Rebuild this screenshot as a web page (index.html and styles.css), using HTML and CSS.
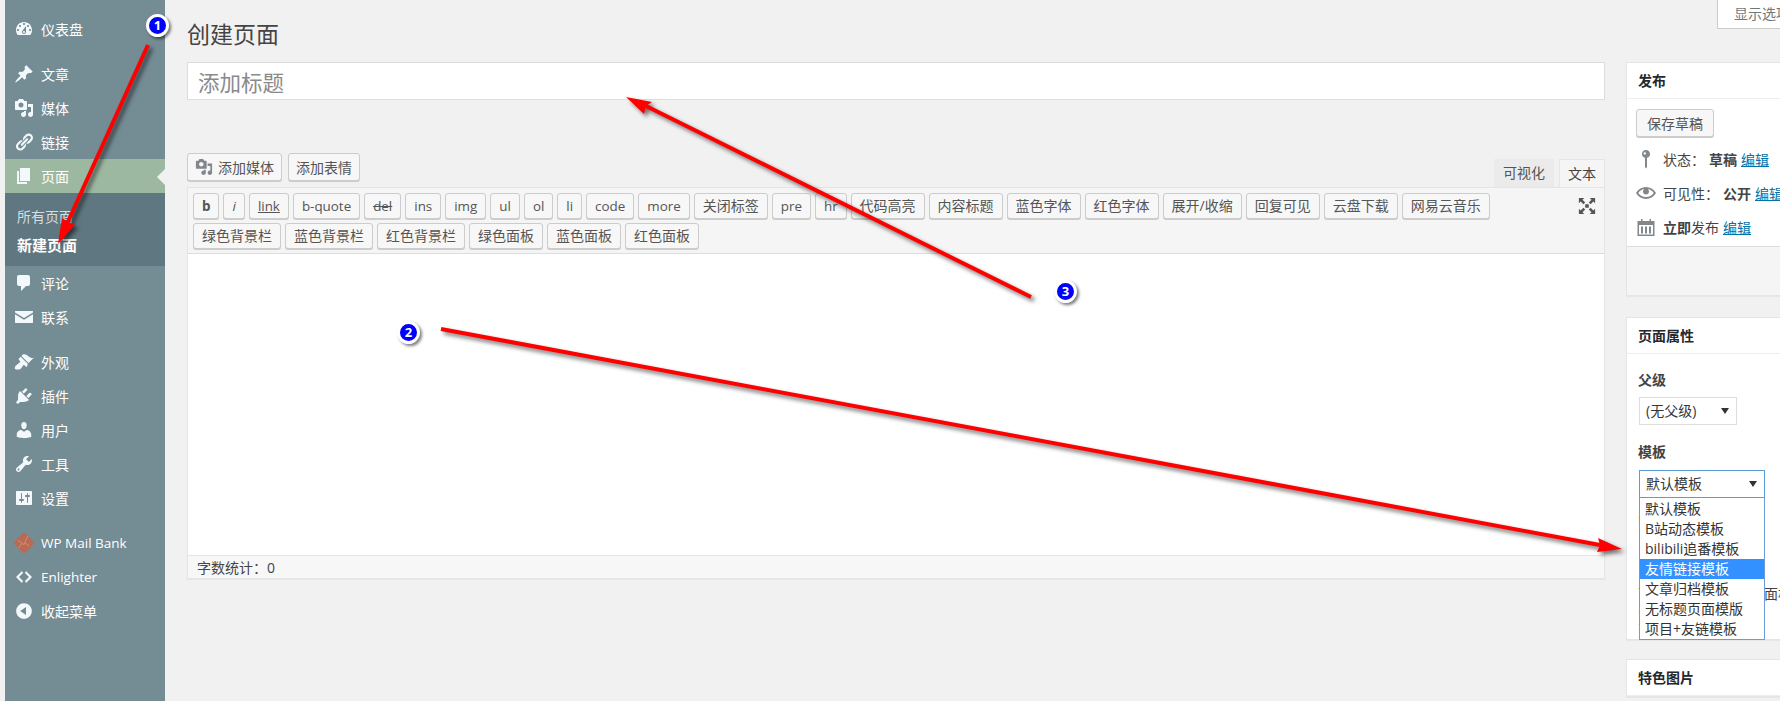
FILE: index.html
```html
<!DOCTYPE html>
<html>
<head>
    <meta charset="utf-8">
    <title>创建页面</title>
    <link rel="stylesheet" href="styles.css">
</head>
<body>
    <svg class="sprite" width="0" height="0">
        <symbol id="i-dash" viewBox="0 0 20 20"><path d="M3.76 16h12.48c1.1-1.37 1.76-3.11 1.76-5 0-4.42-3.58-8-8-8s-8 3.58-8 8c0 1.89.66 3.63 1.76 5zM10 4c.55 0 1 .45 1 1s-.45 1-1 1-1-.45-1-1 .45-1 1-1zM6 6c.55 0 1 .45 1 1s-.45 1-1 1-1-.45-1-1 .45-1 1-1zm8 0c.55 0 1 .45 1 1s-.45 1-1 1-1-.45-1-1 .45-1 1-1zm-5.37 5.55L12 7v6c0 1.1-.9 2-2 2s-2-.9-2-2c0-.57.24-1.08.63-1.45zM4 10c.55 0 1 .45 1 1s-.45 1-1 1-1-.45-1-1 .45-1 1-1zm12 0c.55 0 1 .45 1 1s-.45 1-1 1-1-.45-1-1 .45-1 1-1zm-5 3c0-.55-.45-1-1-1s-1 .45-1 1 .45 1 1 1 1-.45 1-1z" fill-rule="evenodd"/></symbol>
        <symbol id="i-pin" viewBox="0 0 20 20"><path d="M10.44 3.02l1.82-1.82 6.36 6.35-1.83 1.82c-1.05-.68-2.48-.57-3.41.36l-.75.75c-.92.93-1.04 2.35-.35 3.41l-1.83 1.82-2.41-2.41-2.8 2.79c-.42.42-3.38 2.71-3.8 2.29s1.86-3.39 2.28-3.81l2.79-2.79L4.1 9.36l1.83-1.82c1.05.69 2.48.57 3.4-.36l.75-.75c.93-.92 1.05-2.35.36-3.41z"/></symbol>
        <symbol id="i-media" viewBox="0 0 20 20"><path d="M13 11V4c0-.55-.45-1-1-1h-1.67L9 1H5L3.67 3H2c-.55 0-1 .45-1 1v7c0 .55.45 1 1 1h10c.55 0 1-.45 1-1zM7 4.5c1.38 0 2.5 1.12 2.5 2.5S8.38 9.5 7 9.5 4.5 8.38 4.5 7 5.62 4.5 7 4.5zM14 6h5v10.5c0 1.38-1.12 2.5-2.5 2.5S14 17.88 14 16.5s1.12-2.5 2.5-2.5c.17 0 .34.02.5.05V9h-3V6zm-4 8.05V13h2v3.5c0 1.38-1.12 2.5-2.5 2.5S7 17.88 7 16.5 8.12 14 9.5 14c.17 0 .34.02.5.05z"/></symbol>
        <symbol id="i-link" viewBox="0 0 20 20"><path d="M17.74 2.76c1.68 1.69 1.68 4.41 0 6.1l-1.53 1.52c-1.12 1.12-2.7 1.49-4.13 1.13l4.15-4.15c.84-.84.84-2.2 0-3.04-.84-.85-2.2-.85-3.04 0L9.04 8.47c-.36-1.43.01-3.01 1.13-4.13l1.47-1.58c1.69-1.68 4.42-1.68 6.1 0zM8.59 13.43l5.34-5.34c.42-.42.42-1.1 0-1.52-.44-.43-1.13-.39-1.53 0l-5.33 5.34c-.42.42-.42 1.1 0 1.52.44.43 1.13.39 1.52 0zm-.76 2.29l4.14-4.15c.38 1.44 0 3.02-1.14 4.16l-1.52 1.52c-1.69 1.69-4.41 1.69-6.1 0-1.68-1.68-1.68-4.41 0-6.1l1.53-1.52c1.13-1.14 2.71-1.52 4.15-1.14L4.7 12.74c-.84.84-.84 2.2 0 3.04.84.85 2.2.85 3.13-.06z"/></symbol>
        <symbol id="i-page" viewBox="0 0 20 20"><path d="M6 15V2h10v13H6zm-1 1h8v2H3V5h2v11z"/></symbol>
        <symbol id="i-comment" viewBox="0 0 20 20"><path d="M5 2h9c1.1 0 2 .9 2 2v7c0 1.1-.9 2-2 2h-2l-5 5v-5H5c-1.1 0-2-.9-2-2V4c0-1.1.9-2 2-2z"/></symbol>
        <symbol id="i-mail" viewBox="0 0 20 20"><path d="M1.5 4h17c.3 0 .5.2.5.5v1L10 11 1 5.5v-1c0-.3.2-.5.5-.5zM1 7.3l9 5.5 9-5.5v8.2c0 .3-.2.5-.5.5h-17c-.3 0-.5-.2-.5-.5z"/></symbol>
        <symbol id="i-brush" viewBox="0 0 20 20"><path d="M14.48 11.06L7.41 3.99l1.5-1.5c.5-.56 2.3-.47 3.51.32 1.21.8 1.43 1.28 2.91 2.1 1.18.64 2.45 1.26 4.45.85zm-.71.71L6.7 4.7 4.93 6.47c-.39.39-.39 1.02 0 1.41l1.06 1.06c.39.39.39 1.03 0 1.42-.6.6-1.43 1.11-2.21 1.69-.35.26-.7.53-1.01.84C1.43 13.23.4 15.86.85 16.65c.44.79 3.2 1.11 4.52.88.83-.14 1.8-1.15 2.33-2.06.42-.73.9-1.48 1.5-2.08.39-.39 1.03-.39 1.42 0l1.06 1.06c.39.39 1.02.39 1.41 0z"/></symbol>
        <symbol id="i-plug" viewBox="0 0 20 20"><path d="M13.11 4.36L9.87 7.6 8 5.73l3.24-3.24c.35-.34 1.05-.2 1.56.32.52.51.66 1.21.31 1.55zm-8 1.77l.91-1.12 9.01 9.01-1.19.84c-.71.71-2.63 1.16-3.82 1.16H6.14L4.9 17.26c-.59.59-1.54.59-2.12 0-.59-.58-.59-1.53 0-2.12l1.24-1.24v-3.88c0-1.13.4-3.19 1.09-3.89zm7.26 3.97l3.24-3.24c.34-.35 1.04-.21 1.55.31.52.51.66 1.21.31 1.55l-3.24 3.25z"/></symbol>
        <symbol id="i-user" viewBox="0 0 20 20"><path d="M10 9.25c-2.27 0-2.73-3.44-2.73-3.44C7 4.02 7.82 2 9.97 2c2.16 0 2.98 2.02 2.71 3.81 0 0-.41 3.44-2.68 3.44zm0 2.57L12.72 10c2.39 0 4.52 2.33 4.52 4.53v2.49s-3.65 1.13-7.24 1.13c-3.65 0-7.24-1.13-7.24-1.13v-2.49c0-2.25 1.94-4.48 4.47-4.48z"/></symbol>
        <symbol id="i-tool" viewBox="0 0 20 20"><path d="M16.68 9.77c-1.34 1.34-3.3 1.67-4.95.99l-5.41 6.52c-.99.99-2.59.99-3.58 0s-.99-2.59 0-3.57l6.52-5.42c-.68-1.65-.35-3.61.99-4.95 1.28-1.28 3.12-1.62 4.72-1.06l-2.89 2.89 2.82 2.82 2.86-2.87c.53 1.58.18 3.39-1.08 4.65zM3.81 16.21c.4.39 1.04.39 1.43 0 .4-.4.4-1.04 0-1.43-.39-.4-1.03-.4-1.43 0-.39.39-.39 1.03 0 1.43z"/></symbol>
        <symbol id="i-set" viewBox="0 0 20 20"><path d="M18 16V4c0-.55-.45-1-1-1H3c-.55 0-1 .45-1 1v12c0 .55.45 1 1 1h14c.55 0 1-.45 1-1zM8 11h1c.55 0 1 .45 1 1s-.45 1-1 1H8v1.5c0 .28-.22.5-.5.5s-.5-.22-.5-.5V13H6c-.55 0-1-.45-1-1s.45-1 1-1h1V5.5c0-.28.22-.5.5-.5s.5.22.5.5V11zm5-2h-1c-.55 0-1-.45-1-1s.45-1 1-1h1V5.5c0-.28.22-.5.5-.5s.5.22.5.5V7h1c.55 0 1 .45 1 1s-.45 1-1 1h-1v5.5c0 .28-.22.5-.5.5s-.5-.22-.5-.5V9z"/></symbol>
        <symbol id="i-bank" viewBox="0 0 20 20"><path d="M11 1l8 8c.6.6.6 1.4 0 2l-8 8c-.6.6-1.4.6-2 0l-8-8c-.6-.6-.6-1.4 0-2l8-8c.6-.6 1.4-.6 2 0z" fill="#b86b52"/><path d="M4.5 7.5l5.5 4 3.5-8M5 14.5l3.5-4.5M15 13l-4-3" fill="none" stroke="#d9957f" stroke-width=".7"/></symbol>
        <symbol id="i-code" viewBox="0 0 20 20"><path d="M9 6l-4 4 4 4-1 2-6-6 6-6zm2 8l4-4-4-4 1-2 6 6-6 6z"/></symbol>
        <symbol id="i-back" viewBox="0 0 20 20"><path d="M10 2.16c4.33 0 7.84 3.51 7.84 7.84s-3.51 7.84-7.84 7.84S2.16 14.33 2.16 10 5.71 2.16 10 2.16zm2 11.72V6.12L6.18 9.97z"/></symbol>
        <symbol id="i-marker" viewBox="0 0 20 20"><path d="M10 1a4 4 0 0 1 1 7.87V18l-1 1.5L9 18V8.87A4 4 0 0 1 10 1zM8.8 3.2a1.2 1.2 0 1 0 0 2.4 1.2 1.2 0 0 0 0-2.4z" fill-rule="evenodd"/></symbol>
        <symbol id="i-eye" viewBox="0 0 20 20"><path d="M19.7 9.4C17.7 6 14 3.9 10 3.9S2.3 6 .3 9.4L0 10l.3.6c2 3.4 5.7 5.5 9.7 5.5s7.7-2.1 9.7-5.5l.3-.6-.3-.6zM10 14.1c-3.1 0-6-1.6-7.7-4.1C3.6 8 5.7 6.6 8 6.1 7.3 6.8 7 7.6 7 8.5c0 1.7 1.3 3 3 3s3-1.3 3-3c0-.9-.3-1.7-1-2.4 2.3.5 4.4 1.9 5.7 3.9-1.7 2.5-4.6 4.1-7.7 4.1z"/></symbol>
        <symbol id="i-cal" viewBox="0 0 20 20"><path d="M1.5 4H5V2h1.5v2h7V2H15v2h3.5v15h-17zM3 8v9.5h14V8zm2 1.5h2v7H5zm4 0h2v7H9zm4 0h2v7h-2z" fill-rule="evenodd"/></symbol>
        <symbol id="i-full" viewBox="0 0 20 20"><path d="M1 1h6L5 3l3 3-2 2-3-3-2 2zm18 0v6l-2-2-3 3-2-2 3-3-2-2zM1 19v-6l2 2 3-3 2 2-3 3 2 2zm18 0h-6l2-2-3-3 2-2 3 3 2-2zM8 8h4v4H8z"/></symbol>
    </svg>

    <div class="wrap">
        <div class="sidebar">
            <div class="menu-group">
                <div class="menu-item"><svg class="menu-icon"><use href="#i-dash"/></svg>仪表盘</div>
            </div>
            <div class="menu-group">
                <div class="menu-item"><svg class="menu-icon"><use href="#i-pin"/></svg>文章</div>
                <div class="menu-item"><svg class="menu-icon"><use href="#i-media"/></svg>媒体</div>
                <div class="menu-item"><svg class="menu-icon"><use href="#i-link"/></svg>链接</div>
                <div class="menu-item active"><svg class="menu-icon"><use href="#i-page"/></svg>页面</div>
                <div class="submenu">
                    <div class="sub-item">所有页面</div>
                    <div class="sub-item current">新建页面</div>
                </div>
                <div class="menu-item"><svg class="menu-icon"><use href="#i-comment"/></svg>评论</div>
                <div class="menu-item"><svg class="menu-icon"><use href="#i-mail"/></svg>联系</div>
            </div>
            <div class="menu-group">
                <div class="menu-item"><svg class="menu-icon"><use href="#i-brush"/></svg>外观</div>
                <div class="menu-item"><svg class="menu-icon"><use href="#i-plug"/></svg>插件</div>
                <div class="menu-item"><svg class="menu-icon"><use href="#i-user"/></svg>用户</div>
                <div class="menu-item"><svg class="menu-icon"><use href="#i-tool"/></svg>工具</div>
                <div class="menu-item"><svg class="menu-icon"><use href="#i-set"/></svg>设置</div>
            </div>
            <div class="menu-group">
                <div class="menu-item latin"><svg class="menu-icon bank"><use href="#i-bank"/></svg>WP Mail Bank</div>
                <div class="menu-item latin"><svg class="menu-icon"><use href="#i-code"/></svg>Enlighter</div>
                <div class="menu-item"><svg class="menu-icon"><use href="#i-back"/></svg>收起菜单</div>
            </div>
        </div>

        <div class="main">
            <div class="content">
                <h1 class="title">创建页面</h1>
                <div class="title-input">添加标题</div>

                <div class="editor-top">
                    <div class="media-buttons">
                        <div class="btn"><svg class="btn-icon"><use href="#i-media"/></svg>添加媒体</div>
                        <div class="btn">添加表情</div>
                    </div>
                    <div class="tabs">
                        <div class="tab">可视化</div>
                        <div class="tab on">文本</div>
                    </div>
                </div>

                <div class="editor">
                    <div class="toolbar">
                        <div class="qt-row">
                            <div class="qt lat strong">b</div>
                            <div class="qt lat em">i</div>
                            <div class="qt lat under">link</div>
                            <div class="qt lat">b-quote</div>
                            <div class="qt lat strike">del</div>
                            <div class="qt lat">ins</div>
                            <div class="qt lat">img</div>
                            <div class="qt lat">ul</div>
                            <div class="qt lat">ol</div>
                            <div class="qt lat">li</div>
                            <div class="qt lat">code</div>
                            <div class="qt lat">more</div>
                            <div class="qt">关闭标签</div>
                            <div class="qt lat">pre</div>
                            <div class="qt lat">hr</div>
                            <div class="qt">代码高亮</div>
                            <div class="qt">内容标题</div>
                            <div class="qt">蓝色字体</div>
                            <div class="qt">红色字体</div>
                            <div class="qt">展开/收缩</div>
                            <div class="qt">回复可见</div>
                            <div class="qt">云盘下载</div>
                            <div class="qt">网易云音乐</div>
                            <svg class="full-icon"><use href="#i-full"/></svg>
                        </div>
                        <div class="qt-row">
                            <div class="qt">绿色背景栏</div>
                            <div class="qt">蓝色背景栏</div>
                            <div class="qt">红色背景栏</div>
                            <div class="qt">绿色面板</div>
                            <div class="qt">蓝色面板</div>
                            <div class="qt">红色面板</div>
                        </div>
                    </div>
                    <div class="editor-body"></div>
                    <div class="status-bar">字数统计：0</div>
                </div>
            </div>

            <div class="side">
                <div class="box publish">
                    <div class="box-head">发布</div>
                    <div class="box-body">
                        <div class="btn save">保存草稿</div>
                        <div class="pub-row"><svg class="pub-icon"><use href="#i-marker"/></svg>状态： <b>草稿</b> <a href="#">编辑</a></div>
                        <div class="pub-row"><svg class="pub-icon"><use href="#i-eye"/></svg>可见性： <b>公开</b> <a href="#">编辑</a></div>
                        <div class="pub-row"><svg class="pub-icon"><use href="#i-cal"/></svg><span><b>立即</b>发布</span> <a href="#">编辑</a></div>
                    </div>
                    <div class="box-foot"></div>
                </div>

                <div class="box attrs">
                    <div class="box-head">页面属性</div>
                    <div class="box-body">
                        <div class="attr-label">父级</div>
                        <div class="select parent">(无父级)<i class="caret"></i></div>
                        <div class="attr-label second">模板</div>
                        <div class="template-wrap">
                            <div class="select focus">默认模板<i class="caret"></i></div>
                            <div class="dropdown">
                                <div class="option">默认模板</div>
                                <div class="option">B站动态模板</div>
                                <div class="option">bilibili追番模板</div>
                                <div class="option hover">友情链接模板</div>
                                <div class="option">文章归档模板</div>
                                <div class="option">无标题页面模版</div>
                                <div class="option">项目+友链模板</div>
                            </div>
                        </div>
                        <p class="attr-note">需要帮助</p>
                        <p class="attr-note low">可在显示选项中启用面板<br>页面排序</p>
                    </div>
                </div>

                <div class="box">
                    <div class="box-head">特色图片</div>
                </div>
            </div>
        </div>
    </div>

    <div class="screen-tab">显示选项</div>

    <!-- annotations drawn over the screenshot -->
    <svg class="arrows" width="1780" height="701">
        <g class="arrow">
            <line x1="148" y1="45" x2="66" y2="226"/>
            <polygon points="58,244 62,218 68,222 75,225"/>
        </g>
        <g class="arrow">
            <line x1="441" y1="329" x2="1600" y2="545"/>
            <polygon points="1622,549 1598,538 1600,545 1597,552"/>
        </g>
        <g class="arrow">
            <line x1="1031" y1="297" x2="646" y2="106"/>
            <polygon points="626,97 652,102 646,106 644,114"/>
        </g>
    </svg>
    <div class="badge b1">1</div>
    <div class="badge b2">2</div>
    <div class="badge b3">3</div>
</body>
</html>
```

FILE: styles.css
```css
html, body {
    margin: 0;
    height: 701px;
    overflow: hidden;
}

body {
    position: relative;
    background-color: #f1f1f1;
    color: #444;
    font-family: "Open Sans", "Noto Sans CJK SC", sans-serif;
    font-size: 14px;
}

.sprite {
    position: absolute;
}

.wrap {
    display: flex;
    height: 701px;
    padding-left: 5px;
}

/* left menu */
.sidebar {
    flex: 0 0 160px;
    padding-top: 12px;
    background-color: #748c94;
    color: #fff;
}

.menu-group {
    margin-bottom: 11px;
}

.menu-item {
    position: relative;
    display: flex;
    align-items: center;
    height: 34px;
    padding-left: 9px;
}

.menu-item.latin {
    font-size: 13.5px;
}

.menu-icon {
    flex: none;
    width: 20px;
    height: 20px;
    margin-right: 7px;
    fill: #f2f8fb;
}

.menu-icon.bank {
    width: 22px;
    height: 22px;
    margin-left: -1px;
    margin-right: 6px;
}

.menu-item.active {
    background-color: #9db8a0;
}

.menu-item.active::after {
    content: "";
    position: absolute;
    right: 0;
    top: 10px;
    border: 8px solid transparent;
    border-right-color: #f1f1f1;
    border-left-width: 0;
}

.submenu {
    height: 73px;
    padding-top: 9px;
    box-sizing: border-box;
    background-color: #5f7780;
}

.sub-item {
    height: 29px;
    line-height: 29px;
    padding-left: 12px;
    color: #d5dee1;
}

.sub-item.current {
    color: #fff;
    font-size: 15px;
    font-weight: 700;
}

/* main area */
.main {
    flex: 1;
    display: flex;
    gap: 21px;
    padding-left: 22px;
    min-width: 0;
}

.content {
    flex: 0 0 1418px;
}

.title {
    margin: 0;
    padding-top: 19px;
    height: 62px;
    box-sizing: border-box;
    line-height: 31px;
    font-size: 23px;
    font-weight: 400;
    color: #444;
}

.title-input {
    height: 38px;
    box-sizing: border-box;
    padding-left: 10px;
    background-color: #fff;
    border: 1px solid #ddd;
    line-height: 39px;
    font-size: 21.5px;
    color: #8a8a8a;
}

.editor-top {
    display: flex;
    justify-content: space-between;
    height: 34px;
    margin-top: 53px;
}

.media-buttons {
    display: flex;
    gap: 6px;
}

.btn {
    display: flex;
    align-items: center;
    height: 28px;
    box-sizing: border-box;
    padding: 0 7px;
    background-color: #f7f7f7;
    border: 1px solid #ccc;
    border-radius: 3px;
    box-shadow: 0 1px 0 #ccc;
    color: #555;
}

.btn-icon {
    width: 18px;
    height: 18px;
    margin-right: 5px;
    fill: #82878c;
}

.tabs {
    display: flex;
    align-items: flex-end;
    gap: 5px;
}

.tab {
    height: 28px;
    box-sizing: border-box;
    padding: 0 9px;
    line-height: 28px;
    background-color: #ebebeb;
    color: #555;
}

.tab.on {
    padding: 0 8px;
    background-color: #f5f5f5;
    border: 1px solid #e5e5e5;
    border-bottom: none;
    color: #444;
}

.editor {
    border: 1px solid #e5e5e5;
    background-color: #fff;
    box-shadow: 0 1px 1px rgba(0, 0, 0, 0.04);
}

.toolbar {
    height: 66px;
    box-sizing: border-box;
    padding: 5px 5px 0;
    background-color: #f5f5f5;
    border-bottom: 1px solid #ddd;
}

.qt-row {
    display: flex;
    align-items: center;
    gap: 4px;
    height: 26px;
    margin-bottom: 4px;
}

.qt {
    height: 26px;
    box-sizing: border-box;
    padding: 0 8px;
    line-height: 24px;
    background-color: #f7f7f7;
    border: 1px solid #ccc;
    border-radius: 3px;
    box-shadow: 0 1px 0 #ccc;
    color: #555;
    white-space: nowrap;
}

.qt.lat {
    font-size: 13.4px;
}

.qt.strong {
    font-weight: 700;
}

.qt.em {
    font-style: italic;
}

.qt.under {
    text-decoration: underline;
}

.qt.strike {
    text-decoration: line-through;
}

.full-icon {
    width: 18px;
    height: 18px;
    margin-left: auto;
    margin-right: 3px;
    fill: #555;
}

.editor-body {
    height: 301px;
}

.status-bar {
    height: 23px;
    box-sizing: border-box;
    padding-left: 9px;
    line-height: 24px;
    background-color: #f7f7f7;
    border-top: 1px solid #e5e5e5;
    color: #444;
}

/* right column */
.side {
    flex: 0 0 280px;
    padding-top: 62px;
}

.box {
    margin-bottom: 21px;
    background-color: #fff;
    border: 1px solid #e5e5e5;
    box-shadow: 0 1px 1px rgba(0, 0, 0, 0.04);
}

.box-head {
    height: 36px;
    box-sizing: border-box;
    padding-left: 11px;
    line-height: 36px;
    border-bottom: 1px solid #eee;
    font-weight: 700;
    color: #23282d;
}

.publish .box-body {
    height: 147px;
    box-sizing: border-box;
    padding: 10px 9px 0;
}

.btn.save {
    display: inline-flex;
    padding: 0 10px;
    margin-bottom: 5px;
}

.pub-row {
    display: flex;
    align-items: center;
    gap: 4px;
    height: 34px;
    white-space: nowrap;
}

.pub-row a {
    color: #0073aa;
}

.pub-row b {
    color: #444;
}

.pub-icon {
    flex: none;
    width: 20px;
    height: 20px;
    margin-right: 3px;
    fill: #82878c;
}

.box-foot {
    height: 48px;
    background-color: #f5f5f5;
    border-top: 1px solid #ddd;
}

.attrs {
    height: 323px;
    box-sizing: border-box;
    margin-bottom: 19px;
}

.attrs .box-body {
    padding: 15px 12px 0;
}

.attr-label {
    height: 22px;
    margin-left: -1px;
    line-height: 22px;
    font-weight: 700;
    color: #444;
}

.attr-label.second {
    margin-top: 16px;
}

.select {
    position: relative;
    height: 28px;
    box-sizing: border-box;
    padding-left: 6px;
    line-height: 26px;
    background-color: #fff;
    border: 1px solid #ddd;
    color: #32373c;
    margin-top: 6px;
}

.select.parent {
    width: 98px;
}

.select.focus {
    width: 126px;
    border-color: #5b9dd9;
    margin-top: 0;
}

.caret {
    position: absolute;
    right: 7px;
    top: 10px;
    border: 4px solid transparent;
    border-top: 6px solid #333;
    border-bottom-width: 0;
}

.template-wrap {
    position: relative;
    margin-top: 7px;
    height: 28px;
}

.dropdown {
    position: absolute;
    left: 0;
    top: 28px;
    z-index: 2;
    width: 126px;
    box-sizing: border-box;
    padding-top: 1px;
    background-color: #fff;
    border: 1px solid #6f9bd8;
    border-top: none;
}

.option {
    height: 20px;
    line-height: 20px;
    padding-left: 5px;
    color: #333;
    white-space: nowrap;
}

.option.hover {
    background-color: #3390ff;
    color: #fff;
}

.attr-note {
    margin: 11px 0 0 -1px;
    white-space: nowrap;
    line-height: 24px;
}

.attr-note.low {
    margin-top: 49px;
}

.screen-tab {
    position: absolute;
    top: 0;
    left: 1717px;
    width: 90px;
    height: 29px;
    box-sizing: border-box;
    padding-left: 16px;
    line-height: 27px;
    background-color: #fff;
    border-left: 1px solid #ccc;
    border-bottom: 1px solid #ccc;
    color: #72777c;
}

/* annotations */
.arrows {
    position: absolute;
    left: 0;
    top: 0;
    z-index: 5;
}

.arrow {
    filter: drop-shadow(3px 3px 2px rgba(0, 0, 0, 0.55));
}

.arrow line {
    stroke: #f00;
    stroke-width: 4;
}

.arrow polygon {
    fill: #f00;
}

.badge {
    position: absolute;
    z-index: 6;
    width: 17px;
    height: 17px;
    background-color: #00f;
    border: 3px solid #fff;
    border-radius: 50%;
    box-shadow: 2px 2px 3px rgba(0, 0, 0, 0.5);
    text-align: center;
    line-height: 17px;
    font-size: 13px;
    font-weight: 700;
    color: #fff;
}

.b1 {
    left: 146px;
    top: 14px;
}

.b2 {
    left: 397px;
    top: 321px;
}

.b3 {
    left: 1054px;
    top: 280px;
}
```
